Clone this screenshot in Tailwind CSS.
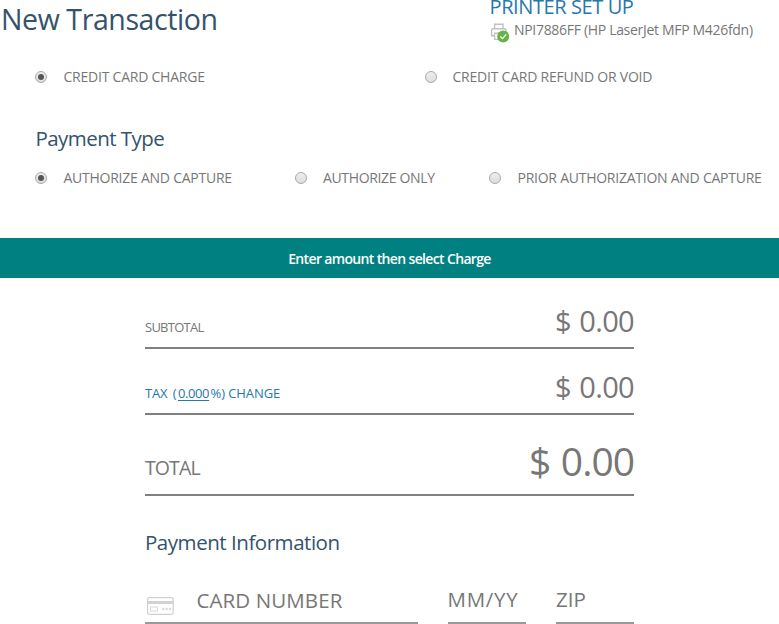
<!DOCTYPE html>
<html lang="en">
<head>
<meta charset="utf-8">
<title>New Transaction</title>
<script src="https://cdn.jsdelivr.net/npm/@tailwindcss/browser@4"></script>
</head>
<body class="w-[779px] h-[624px] overflow-hidden bg-white font-['Open_Sans',sans-serif] text-[#777] text-sm whitespace-nowrap">
  <header class="flex h-[46px]">
    <h1 class="w-[490px] pl-px text-[28.5px] leading-[39px] tracking-[-0.4px] text-[#34536b]">New Transaction</h1>
    <div>
      <a class="block -ml-[0.5px] h-4 text-[20px] leading-[14px] tracking-[-0.4px] text-[#2678ab]">PRINTER SET UP</a>
      <div class="flex items-center h-7">
        <svg class="mt-[5px] mr-[4px]" width="20" height="20" viewBox="0 0 20 20" fill="none">
          <g stroke="#c0c0c0" stroke-width="1.4">
            <path d="M4.6 5.8V1.2H13V5.8"/>
            <path d="M4 12.8H1.6V7.2Q1.6 5.8 3 5.8H14.6Q16 5.8 16 7.2V10"/>
            <path d="M4.6 10.2H13V16.4H4.6Z"/>
          </g>
          <circle cx="13.2" cy="13.4" r="6" fill="#62b544"/>
          <path d="M10.3 13.6L12.5 15.6L16.2 11.4" stroke="#fff" stroke-width="1.3"/>
        </svg>
        <span class="leading-7 tracking-[-0.31px]">NPI7886FF (HP LaserJet MFP M426fdn)</span>
      </div>
    </div>
  </header>

  <div class="flex h-[62px] items-center pl-[35px]">
    <label class="flex w-[390px] items-center gap-[16.5px]">
      <span class="flex size-3 items-center justify-center rounded-full border border-[#a9a9a9] bg-linear-to-b from-[#eee] to-[#ddd]"><span class="size-1.5 rounded-full bg-[#555]"></span></span>
      <span class="tracking-[-0.23px]">CREDIT CARD CHARGE</span>
    </label>
    <label class="flex items-center gap-[15.5px]">
      <span class="size-3 rounded-full border border-[#a9a9a9] bg-linear-to-b from-[#eee] to-[#ddd]"></span>
      <span class="tracking-[-0.22px]">CREDIT CARD REFUND OR VOID</span>
    </label>
  </div>

  <h2 class="pl-[35.5px] text-[20.5px] leading-[60px] tracking-[-0.55px] text-[#34536b]">Payment Type</h2>

  <div class="flex h-5 items-center pl-[35px]">
    <label class="flex w-[260px] items-center gap-[16.5px]">
      <span class="flex size-3 items-center justify-center rounded-full border border-[#a9a9a9] bg-linear-to-b from-[#eee] to-[#ddd]"><span class="size-1.5 rounded-full bg-[#555]"></span></span>
      <span class="tracking-[-0.25px]">AUTHORIZE AND CAPTURE</span>
    </label>
    <label class="flex w-[194px] items-center gap-[16px]">
      <span class="size-3 rounded-full border border-[#a9a9a9] bg-linear-to-b from-[#eee] to-[#ddd]"></span>
      <span class="tracking-[-0.35px]">AUTHORIZE ONLY</span>
    </label>
    <label class="flex items-center gap-[16.5px]">
      <span class="size-3 rounded-full border border-[#a9a9a9] bg-linear-to-b from-[#eee] to-[#ddd]"></span>
      <span class="tracking-[-0.25px]">PRIOR AUTHORIZATION AND CAPTURE</span>
    </label>
  </div>

  <div class="mt-[50px] h-10 bg-[#008080] text-center font-semibold leading-[41px] tracking-[-0.65px] text-white">Enter amount then select Charge</div>

  <main class="ml-[145px] w-[489px]">
    <div class="flex h-[71px] items-end justify-between border-b-2 border-[#808080]">
      <span class="text-[13px] leading-10 tracking-[-0.75px]">SUBTOTAL</span>
      <span class="text-[29px] leading-[53px] tracking-[-0.65px] [word-spacing:1.5px]">$ 0.00</span>
    </div>
    <div class="flex h-[66px] items-end justify-between border-b-2 border-[#808080]">
      <span class="flex text-[13px] leading-10 tracking-[-0.2px] text-[#2678ab]"><span>TAX</span><span class="ml-[5.5px]">(</span><span class="ml-[1.5px] mt-[13px] h-[19px] leading-[14px] tracking-[-0.4px] underline underline-offset-2">0.000</span><span class="ml-[1.5px] tracking-[-0.1px]">%) CHANGE</span></span>
      <span class="text-[29px] leading-[53px] tracking-[-0.65px] [word-spacing:1.5px]">$ 0.00</span>
    </div>
    <div class="flex h-[81px] items-end justify-between border-b-2 border-[#808080]">
      <span class="text-[19.5px] leading-[52px] tracking-[-0.9px]">TOTAL</span>
      <span class="text-[39px] leading-[67px] tracking-[-1px] [word-spacing:1.5px]">$ 0.00</span>
    </div>

    <h2 class="mt-[23px] text-[20.5px] leading-[46px] tracking-[-0.46px] text-[#34536b]">Payment Information</h2>

    <div class="flex h-[59px] gap-[30px] text-[20px]">
      <div class="flex w-[273px] items-end border-b-2 border-[#999]">
        <svg class="mb-[6px] ml-[2px] mr-[22.5px]" width="27" height="19" viewBox="0 0 27 19" fill="none">
          <rect x="0.6" y="0.7" width="25.6" height="16.6" rx="1.8" stroke="#d0d0d0" stroke-width="1.2"/>
          <rect x="1" y="4" width="25" height="3" fill="#d2d2d2"/>
          <rect x="3.5" y="10" width="7" height="4" stroke="#d8d8d8"/>
          <path d="M15 12h2.6M18.4 12h2.6M21.8 12h2.6M16.3 10.7v2.6M19.7 10.7v2.6M23.1 10.7v2.6" stroke="#cfcfcf" stroke-width=".9"/>
        </svg>
        <span class="text-[20.5px] leading-[43px] tracking-[0.1px]">CARD NUMBER</span>
      </div>
      <div class="flex w-[78px] items-end border-b-2 border-[#999]"><span class="-ml-[0.5px] text-[20.5px] leading-[46px] tracking-[0.7px]">MM/YY</span></div>
      <div class="flex w-[78px] items-end border-b-2 border-[#999]"><span class="text-[20.5px] leading-[46px]">ZIP</span></div>
    </div>
  </main>
</body>
</html>
